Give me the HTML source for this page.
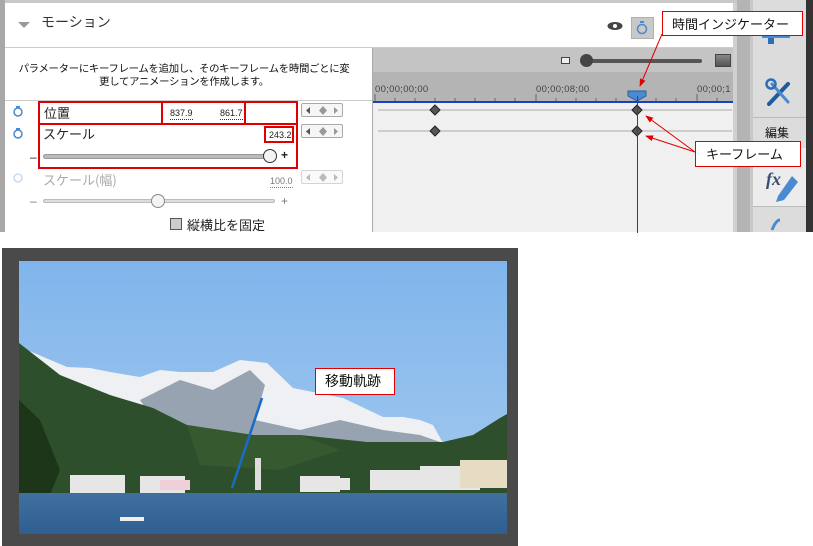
<!DOCTYPE html>
<html><head><meta charset="utf-8"><style>
*{margin:0;padding:0;box-sizing:border-box}
body{width:813px;height:546px;overflow:hidden;background:#fff;position:relative;font-family:"Liberation Sans","Noto Sans CJK JP",sans-serif;font-size:12px;color:#222}
.a{position:absolute}
.jp{font-family:"Noto Sans CJK JP","Liberation Sans",sans-serif}
.rb{position:absolute;border:2px solid #e00000}
.call{position:absolute;background:#fff;border:1px solid #e00000;font-size:13px;line-height:24px;padding-left:9px;font-family:"Noto Sans CJK JP",sans-serif;color:#111;white-space:nowrap}
.kb{position:absolute;width:42px;height:14px;border:1px solid #aaa;background:#f6f6f6;border-radius:2px}
.num{position:absolute;font-size:9px;border-bottom:1px dotted #333;line-height:11px}
</style></head><body>
<div class="a" style="left:0;top:0;width:813px;height:232px;background:#fff"></div>
<div class="a" style="left:0;top:0;width:750px;height:3px;background:#c8c8c8"></div>
<div class="a" style="left:0;top:0;width:5px;height:232px;background:#a8a8a8"></div>
<div class="a" style="left:733px;top:3px;width:4px;height:229px;background:#d0d0d0"></div>
<div class="a" style="left:737px;top:0;width:13px;height:232px;background:#b4b4b4"></div>
<div class="a" style="left:750px;top:0;width:3px;height:232px;background:#c8c8c8"></div>
<div class="a" style="left:753px;top:0;width:53px;height:232px;background:#dcdcdc"></div>
<div class="a" style="left:753px;top:117px;width:53px;height:1px;background:#bbb"></div>
<div class="a" style="left:753px;top:148px;width:53px;height:58px;background:#ececec"></div>
<div class="a" style="left:753px;top:206px;width:53px;height:1px;background:#bbb"></div>
<div class="a" style="left:806px;top:0;width:7px;height:232px;background:#333"></div>
<div class="a jp" style="left:765px;top:124px;font-size:12px;color:#111">編集</div>
<svg class="a" style="left:760px;top:20px" width="50" height="212" viewBox="0 0 50 212">
<rect x="2" y="14" width="28" height="4" fill="#4a8ad0"/><rect x="8" y="18" width="6" height="6" fill="#2e6db8"/>
<path d="M9 84 L28 64" stroke="#1f5c9e" stroke-width="4" stroke-linecap="round"/>
<path d="M12 64 L28 82" stroke="#4a8ad0" stroke-width="3" stroke-linecap="round"/>
<circle cx="11" cy="64" r="4.5" fill="none" stroke="#2e6db8" stroke-width="2.5"/>
<text x="6" y="165" font-size="18" font-style="italic" font-weight="bold" fill="#3a4e70" font-family="Liberation Serif">fx</text>
<path d="M18 176 L32 156 L38 162 L24 180 L16 182Z" fill="#4a8ad0"/>
<path d="M12 210 Q16 200 20 200" stroke="#4a8ad0" stroke-width="3" fill="none"/>
</svg>
<div class="a" style="left:5px;top:47px;width:728px;height:1px;background:#ccc"></div>
<div class="a" style="left:18px;top:22px;width:0;height:0;border-left:6px solid transparent;border-right:6px solid transparent;border-top:6px solid #999"></div>
<div class="a jp" style="left:41px;top:12px;font-size:14px;color:#333">モーション</div>
<svg class="a" style="left:607px;top:21px" width="16" height="10"><ellipse cx="8" cy="5" rx="7.5" ry="4" fill="#444"/><circle cx="8" cy="5" r="2" fill="#fff"/></svg>
<div class="a" style="left:631px;top:17px;width:23px;height:22px;background:#c8c8c8;border:1px solid #b0b0b0"></div>
<svg class="a" style="left:636px;top:20px" width="12" height="16"><rect x="4" y="1" width="4" height="2" fill="#4a8ad0"/><circle cx="6" cy="9" r="4.5" fill="none" stroke="#4a8ad0" stroke-width="1.5"/></svg>
<div class="a jp" style="left:0px;top:61px;width:368px;text-align:center;font-size:10.4px;line-height:13px;color:#111;letter-spacing:-0.3px;white-space:nowrap">パラメーターにキーフレームを追加し、そのキーフレームを時間ごとに変<br>更してアニメーションを作成します。</div>
<div class="a" style="left:5px;top:100px;width:368px;height:1px;background:#ccc"></div>
<svg class="a" style="left:12px;top:104px" width="12" height="120">
<g fill="none" stroke="#4a8ad0" stroke-width="1.5"><circle cx="6" cy="8" r="4"/><circle cx="6" cy="30" r="4"/></g>
<rect x="4" y="2" width="4" height="2" fill="#4a8ad0"/><rect x="4" y="24" width="4" height="2" fill="#4a8ad0"/>
<circle cx="6" cy="74" r="4" fill="none" stroke="#c8dcf0" stroke-width="1.5"/></svg>
<div class="a jp" style="left:44px;top:103px;font-size:13px">位置</div>
<div class="num" style="left:170px;top:108px">837.9</div>
<div class="num" style="left:220px;top:108px">861.7</div>
<div class="a jp" style="left:43px;top:124px;font-size:13px">スケール</div>
<div class="num" style="left:269px;top:130px">243.2</div>
<div class="a" style="left:30px;top:150px;font-size:12px">–</div>
<div class="a" style="left:43px;top:154px;width:232px;height:5px;border-radius:3px;background:#bbb;border:1px solid #999"></div>
<div class="a" style="left:263px;top:149px;width:14px;height:14px;border-radius:50%;background:#f4f4f4;border:1px solid #333"></div>
<div class="a" style="left:281px;top:148px;font-weight:bold">+</div>
<div class="a jp" style="left:43px;top:170px;font-size:13px;color:#aaa">スケール(幅)</div>
<div class="num" style="left:270px;top:176px;color:#777;border-color:#777">100.0</div>
<div class="a" style="left:30px;top:194px;color:#777">–</div>
<div class="a" style="left:43px;top:199px;width:232px;height:4px;border-radius:2px;background:#ddd;border:1px solid #bbb"></div>
<div class="a" style="left:151px;top:194px;width:14px;height:14px;border-radius:50%;background:#f4f4f4;border:1px solid #888"></div>
<div class="a" style="left:281px;top:194px;color:#777">+</div>
<div class="a" style="left:170px;top:218px;width:12px;height:12px;border:1px solid #555;background:#ccc"></div>
<div class="a jp" style="left:187px;top:215px;font-size:13px">縦横比を固定</div>
<div class="kb" style="left:301px;top:103px"></div><div class="kb" style="left:301px;top:124px"></div><div class="kb" style="left:301px;top:170px;opacity:.5"></div>
<svg class="a" style="left:301px;top:103px" width="44" height="90">
<g fill="#555"><path d="M9 4 L5 7.5 L9 11Z"/><path d="M9 25 L5 28.5 L9 32Z"/></g>
<g fill="#999"><path d="M22 3 L26 7.5 L22 12 L18 7.5Z M22 24 L26 28.5 L22 33 L18 28.5Z"/><path d="M33 4 L37 7.5 L33 11Z M33 25 L37 28.5 L33 32Z"/></g>
<g fill="#bbb"><path d="M9 71 L5 74.5 L9 78Z M22 70 L26 74.5 L22 79 L18 74.5Z M33 71 L37 74.5 L33 78Z"/></g></svg>
<div class="rb" style="left:38px;top:101px;width:260px;height:24px"></div>
<div class="rb" style="left:161px;top:101px;width:85px;height:24px"></div>
<div class="rb" style="left:38px;top:123px;width:260px;height:46px"></div>
<div class="rb" style="left:264px;top:126px;width:30px;height:17px"></div>
<div class="a" style="left:372px;top:48px;width:1px;height:184px;background:#aaa"></div>
<div class="a" style="left:373px;top:48px;width:360px;height:24px;background:#c4c4c4"></div>
<div class="a" style="left:373px;top:72px;width:360px;height:29px;background:#b4b4b4"></div>
<div class="a" style="left:373px;top:101px;width:360px;height:2px;background:#1a3fc0"></div>
<div class="a" style="left:373px;top:103px;width:360px;height:129px;background:#f0f0f0"></div>
<div class="a" style="left:561px;top:57px;width:9px;height:7px;border:1px solid #444;background:#eee"></div>
<div class="a" style="left:582px;top:59px;width:120px;height:4px;background:#555;border-radius:2px"></div>
<div class="a" style="left:580px;top:54px;width:13px;height:13px;border-radius:50%;background:#444"></div>
<div class="a" style="left:715px;top:54px;width:16px;height:13px;background:linear-gradient(#888,#555);border:1px solid #444"></div>
<div class="a" style="left:375px;top:84px;font-size:9.5px;color:#444;letter-spacing:.3px">00;00;00;00</div>
<div class="a" style="left:536px;top:84px;font-size:9.5px;color:#444;letter-spacing:.3px">00;00;08;00</div>
<div class="a" style="left:697px;top:84px;font-size:9.5px;color:#444;letter-spacing:.3px">00;00;1</div>
<svg class="a" style="left:373px;top:88px" width="360" height="145">
<g stroke="#666" stroke-width="1"><path d="M2 6V13 M163 6V13 M324 6V13"/><path d="M22 10V13M42 10V13M62 10V13M82 10V13M102 10V13M122 10V13M142 10V13M183 10V13M203 10V13M223 10V13M243 10V13M263 10V13M283 10V13M303 10V13M344 10V13"/></g>
<path d="M5 22H359 M5 43H359" stroke="#aaa"/>
<g fill="#555" stroke="#222"><path d="M62 17L67 22L62 27L57 22Z M62 38L67 43L62 48L57 43Z"/><path d="M264 17L269 22L264 27L259 22Z M264 38L269 43L264 48L259 43Z"/></g>
<path d="M255 3H273V8L264 13L255 8Z" fill="#4a8ad0" stroke="#2e5d9e"/>
<path d="M264.5 8V145" stroke="#e00000"/>
</svg>
<svg class="a" style="left:0;top:0" width="813" height="546">
<defs><marker id="m" markerWidth="8" markerHeight="8" refX="7" refY="4" orient="auto"><path d="M0 1L8 4L0 7Z" fill="#e00000"/></marker></defs>
<g stroke="#e00000" fill="none"><path d="M662 34L640 86" marker-end="url(#m)"/><path d="M695 152L646 116" marker-end="url(#m)"/><path d="M695 152L646 136" marker-end="url(#m)"/><path d="M315 383L258 424" marker-end="url(#m)"/></g>
</svg>
<div class="call" style="left:662px;top:11px;width:141px;height:25px">時間インジケーター</div>
<div class="call" style="left:695px;top:141px;width:106px;height:26px;padding-left:10px">キーフレーム</div>
<div class="a" style="left:2px;top:248px;width:516px;height:298px;background:#4a4a4a"></div>
<svg class="a" style="left:19px;top:261px" width="488" height="273" viewBox="19 261 488 273">
<defs><linearGradient id="s" x1="0" y1="0" x2="0" y2="1"><stop offset="0" stop-color="#80b5ec"/><stop offset="1" stop-color="#a6cbee"/></linearGradient>
<linearGradient id="w" x1="0" y1="0" x2="0" y2="1"><stop offset="0" stop-color="#3f70a0"/><stop offset="1" stop-color="#2f5f90"/></linearGradient></defs>
<rect x="19" y="261" width="488" height="273" fill="url(#s)"/>
<path d="M27 350L67 367L90 368L110 372L140 377L160 370L180 372L213 372L240 360L267 363L293 388L343 398L383 417L403 417L420 420L433 425L443 443L300 450L60 420Z" fill="#eef0f3"/>
<path d="M140 400L180 380L213 390L250 370L265 385L255 420L300 430L340 420L383 430L420 435L443 443L300 450L160 430Z" fill="#97a3b0"/>
<path d="M19 343L60 375L110 395L153 408L187 425L253 435L300 435L367 442L443 442L473 435L500 418L507 414V495H19Z" fill="#2e4f2c"/>
<path d="M19 400L40 420L60 470L50 495H19Z" fill="#1d3519"/>
<path d="M187 425L253 435L300 435L340 450L280 470L200 465Z" fill="#36592f"/>
<g fill="#e6e6e6"><rect x="70" y="475" width="55" height="18"/><rect x="140" y="476" width="45" height="17"/><rect x="160" y="480" width="30" height="10" fill="#f0d0d8"/><rect x="300" y="476" width="40" height="16"/><rect x="370" y="470" width="50" height="20"/><rect x="420" y="466" width="60" height="24"/><rect x="460" y="460" width="47" height="28" fill="#e6dcc4"/><rect x="330" y="478" width="20" height="12"/></g>
<rect x="255" y="458" width="6" height="32" fill="#ddd"/>
<rect x="19" y="493" width="488" height="41" fill="url(#w)"/>
<rect x="120" y="517" width="24" height="4" fill="#eee"/>
<path d="M262 398L232 488" stroke="#1a6ac8" stroke-width="2.5"/>
</svg>
<div class="call" style="left:315px;top:368px;width:80px;height:27px;font-size:14px;line-height:25px">移動軌跡</div>
</body></html>
